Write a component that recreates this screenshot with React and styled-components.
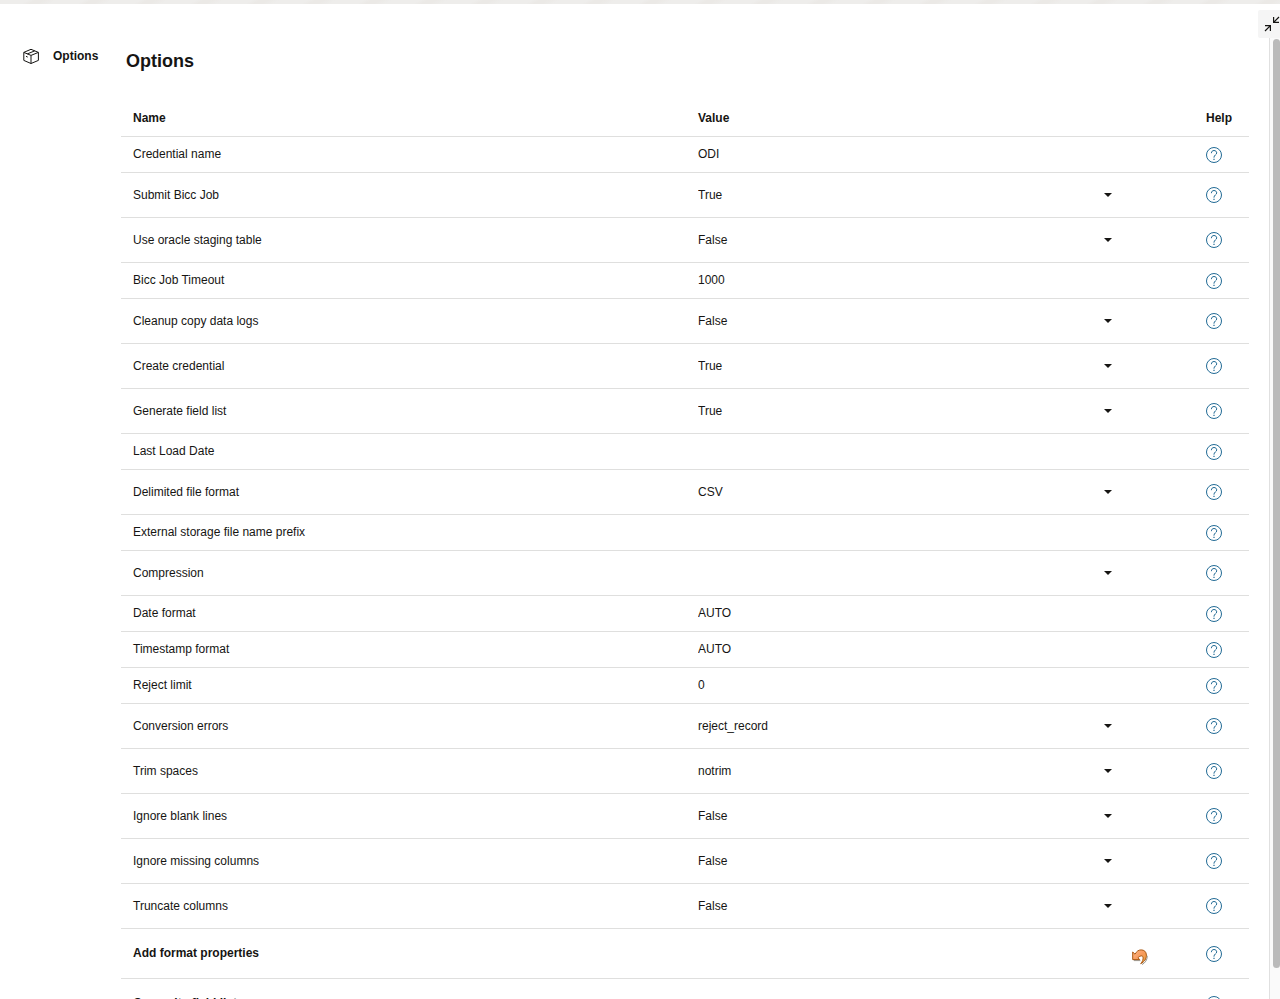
import { useState } from 'react';
import styled, { createGlobalStyle } from 'styled-components';


const OPTIONS = [
    { id: 'credential-name', name: 'Credential name', type: 'text', value: 'ODI' },
    { id: 'submit-job', name: 'Submit Bicc Job', type: 'select', value: 'True', choices: ['True', 'False'] },
    { id: 'staging-table', name: 'Use oracle staging table', type: 'select', value: 'False', choices: ['True', 'False'] },
    { id: 'job-timeout', name: 'Bicc Job Timeout', type: 'text', value: '1000' },
    { id: 'cleanup-logs', name: 'Cleanup copy data logs', type: 'select', value: 'False', choices: ['True', 'False'] },
    { id: 'create-credential', name: 'Create credential', type: 'select', value: 'True', choices: ['True', 'False'] },
    { id: 'generate-fields', name: 'Generate field list', type: 'select', value: 'True', choices: ['True', 'False'] },
    { id: 'last-load', name: 'Last Load Date', type: 'text', value: '' },
    { id: 'file-format', name: 'Delimited file format', type: 'select', value: 'CSV', choices: ['CSV'] },
    { id: 'file-prefix', name: 'External storage file name prefix', type: 'text', value: '' },
    { id: 'compression', name: 'Compression', type: 'select', value: '', choices: [''] },
    { id: 'date-format', name: 'Date format', type: 'text', value: 'AUTO' },
    { id: 'timestamp-format', name: 'Timestamp format', type: 'text', value: 'AUTO' },
    { id: 'reject-limit', name: 'Reject limit', type: 'text', value: '0' },
    { id: 'conversion-errors', name: 'Conversion errors', type: 'select', value: 'reject_record', choices: ['reject_record'] },
    { id: 'trim-spaces', name: 'Trim spaces', type: 'select', value: 'notrim', choices: ['notrim'] },
    { id: 'blank-lines', name: 'Ignore blank lines', type: 'select', value: 'False', choices: ['True', 'False'] },
    { id: 'missing-columns', name: 'Ignore missing columns', type: 'select', value: 'False', choices: ['True', 'False'] },
    { id: 'truncate-columns', name: 'Truncate columns', type: 'select', value: 'False', choices: ['True', 'False'] },
    { id: 'format-properties', name: 'Add format properties', type: 'changed', value: '' },
    { id: 'overwrite-fields', name: 'Overwrite field list', type: 'changed', value: '' },
];

const BoxIcon = () => (
    <svg width="16" height="16" viewBox="0 0 16 16" fill="none" stroke="#161513" strokeLinejoin="round" aria-hidden="true">
        <path d="M8 1.3 15.4 4.4v8L8 15.5.8 12.4v-8z" />
        <path d="M.8 4.4 8 7.4l7.4-3M8 7.4v8.1" />
        <path d="M4.3 5.9l7.4-3M3 8.3l1.7.8" />
    </svg>
);

const CollapseIcon = () => (
    <svg width="16" height="16" viewBox="0 0 16 16" fill="none" stroke="#161513" strokeWidth="1.2" aria-hidden="true">
        <path d="M9.6 1v5.4H15M9.6 6.4 15 1" />
        <path d="M1 9.6h5.4V15M6.4 9.6 1 15" />
    </svg>
);

const HelpIcon = () => (
    <svg width="16" height="16" viewBox="0 0 16 16" fill="none" stroke="#226b95" aria-hidden="true">
        <circle cx="8" cy="8" r="7.5" />
        <path d="M5.4 6.2C5.4 4.5 6.5 3.5 8 3.5s2.7 1 2.7 2.4C10.7 7.9 8 8.1 8 10.2v.5" />
        <path d="M8 11.7V13" strokeWidth="1.2" />
    </svg>
);

const UndoIcon = () => (
    <svg width="16" height="16" viewBox="0 0 16 16" strokeLinejoin="round" aria-hidden="true">
        <defs>
            <linearGradient id="undo-fill" x1="0" y1="0" x2="1" y2="1">
                <stop offset="0" stopColor="#ffb98a" />
                <stop offset=".5" stopColor="#f79a5c" />
                <stop offset="1" stopColor="#e8a83c" />
            </linearGradient>
        </defs>
        <path d="M1.8 11.6h6.6M10 15.6c3.2-1.8 5.4-4.6 5.3-8.8" fill="none" stroke="#9a9a94" />
        <path d="M.7 3v7.6h7L6 8.8C7.8 6.8 10.6 6 11 8.2c.5 2.2-.6 4.6-2.3 6.5 3.6-1.8 5.8-4.9 5.7-8.6C14.3 2.6 12 .9 9.2.9 6.4.9 4.6 2.4 3 5.2z" fill="url(#undo-fill)" stroke="#a9560f" />
    </svg>
);

const OptionRow = ({ option }) => {
    const [value, setValue] = useState(option.value);
    const onChange = (e) => setValue(e.target.value);

    return (
        <Row $type={option.type}>
            <NameCell $type={option.type}>
                <label htmlFor={option.id}>{option.name}</label>
            </NameCell>
            <ValueCell $type={option.type}>
                <Editor>
                    {option.type === 'select' ? (
                        <SelectBox>
                            <Select id={option.id} value={value} onChange={onChange}>
                                {option.choices.map((choice) => <option key={choice}>{choice}</option>)}
                            </Select>
                            <Caret />
                        </SelectBox>
                    ) : (
                        <TextInput id={option.id} value={value} onChange={onChange} />
                    )}
                    {option.type === 'changed' && (
                        <ResetButton aria-label={`Reset ${option.name}`} onClick={() => setValue('')}>
                            <UndoIcon />
                        </ResetButton>
                    )}
                </Editor>
            </ValueCell>
            <HelpCell>
                <IconButton aria-label={`Help for ${option.name}`}>
                    <HelpIcon />
                </IconButton>
            </HelpCell>
        </Row>
    );
};

const App = () => {
    return (
        <>
            <GlobalStyle />
            <Page>
                <TopStrip />
                <Panel>
                    <Sidebar>
                        <SideLink href="#options">
                            <BoxIcon />
                            Options
                        </SideLink>
                    </Sidebar>
                    <Content id="options">
                        <Title>Options</Title>
                        <Table>
                            <colgroup>
                                <NameCol />
                                <col />
                                <HelpCol />
                            </colgroup>
                            <thead>
                                <Row $type="head">
                                    <NameCell as="th" scope="col" $type="head">Name</NameCell>
                                    <ValueCell as="th" scope="col" $type="head">Value</ValueCell>
                                    <HelpCell as="th" scope="col">Help</HelpCell>
                                </Row>
                            </thead>
                            <tbody>
                                {OPTIONS.map((option) => <OptionRow key={option.id} option={option} />)}
                            </tbody>
                        </Table>
                    </Content>
                    <Rail>
                        <CollapseButton aria-label="Restore pane">
                            <CollapseIcon />
                        </CollapseButton>
                        <Track>
                            <Thumb />
                        </Track>
                    </Rail>
                </Panel>
            </Page>
        </>
    );
};
export default App;

const GlobalStyle = createGlobalStyle`
    * {
        box-sizing: border-box;
    }

    body {
        margin: 0;
        overflow: hidden;
        background: #fff;
        color: #161513;
        font: 12px/16px "Liberation Sans", Arial, sans-serif;
    }

    svg {
        display: block;
        flex: none;
    }
`;

const Page = styled.div`
    display: flex;
    flex-direction: column;
    height: 100vh;
    overflow: hidden;
`;

const TopStrip = styled.div`
    flex: none;
    height: 4px;
    background: repeating-linear-gradient(150deg, #eeedeb 0 14px, #ebe9e6 18px 22px, #eeedeb 28px);
`;

const Panel = styled.div`
    display: flex;
    flex: 1;
    min-height: 0;
`;

const Sidebar = styled.nav`
    flex: none;
    width: 121px;
    padding: 44px 0 0 23px;
`;

const SideLink = styled.a`
    display: flex;
    align-items: center;
    gap: 14px;
    color: inherit;
    font-weight: bold;
    text-decoration: none;
`;

const Content = styled.main`
    flex: 1;
    min-width: 0;
    padding-top: 45px;
    overflow: hidden;
`;

const Title = styled.h1`
    margin: 0 0 27px;
    padding-left: 5px;
    font-size: 18px;
    line-height: 24px;
`;

const Table = styled.table`
    width: 100%;
    table-layout: fixed;
    border-spacing: 0;
`;

const NameCol = styled.col`
    width: 50%;
`;

const HelpCol = styled.col`
    width: 55px;
`;

const rowHeights = { head: 37, text: 36, select: 45, changed: 50 };
const bottomPads = { head: 0, text: 2, select: 0, changed: 2 };

const Row = styled.tr`
    height: ${({ $type }) => rowHeights[$type]}px;
`;

const Cell = styled.td`
    padding: 0;
    border-bottom: 1px solid #dfdfde;
    text-align: left;
    vertical-align: middle;
`;

const NameCell = styled(Cell)`
    padding-left: 12px;
    padding-bottom: ${({ $type }) => bottomPads[$type]}px;
    font-weight: ${({ $type }) => ($type === 'changed' || $type === 'head' ? 'bold' : 'normal')};
`;

const ValueCell = styled(Cell)`
    padding-left: 13px;
    padding-bottom: ${({ $type }) => bottomPads[$type]}px;
`;

const HelpCell = styled(Cell)`
    padding-left: 12px;
`;

const Editor = styled.div`
    display: flex;
    align-items: center;
    padding-right: 46px;
`;

const SelectBox = styled.div`
    display: grid;
    flex: 1;
    align-items: center;
    padding-right: 36px;
`;

const Select = styled.select`
    grid-area: 1 / 1;
    width: 100%;
    padding: 0;
    border: none;
    appearance: none;
    background: none;
    color: inherit;
    font: inherit;
`;

const Caret = styled.span`
    grid-area: 1 / 1;
    justify-self: end;
    border: 4px solid transparent;
    border-top-color: #161513;
    border-bottom: none;
    pointer-events: none;
`;

const TextInput = styled.input`
    flex: 1;
    min-width: 0;
    height: 16px;
    padding: 0;
    border: none;
    outline: none;
    background: none;
    color: inherit;
    font: inherit;
`;

const IconButton = styled.button`
    display: block;
    padding: 0;
    border: none;
    background: none;
    cursor: pointer;
`;

const ResetButton = styled(IconButton)`
    padding-top: 8px;
`;

const Rail = styled.div`
    display: flex;
    flex: none;
    flex-direction: column;
    align-items: flex-end;
    width: 31px;
    padding-top: 6px;
`;

const CollapseButton = styled.button`
    display: grid;
    flex: none;
    place-items: center end;
    width: 22px;
    height: 28px;
    padding: 0;
    border: none;
    border-radius: 2px 0 0 2px;
    background: #f5f5f5;
    cursor: pointer;
`;

const Track = styled.div`
    flex: 1;
    width: 11px;
    padding: 1px 0 31px 3px;
    border-left: 1px solid #e0e0e0;
    background: #fafafa;
`;

const Thumb = styled.div`
    height: 100%;
    border-radius: 4px;
    background: #bababa;
`;
